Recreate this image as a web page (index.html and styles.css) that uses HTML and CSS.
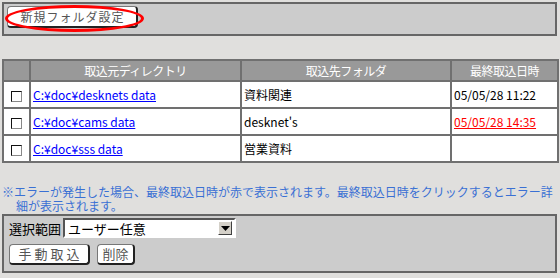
FILE: index.html
```html
<!DOCTYPE html>
<html lang="ja">
<head>
    <meta charset="UTF-8">
    <title>取込設定</title>
    <link rel="stylesheet" href="styles.css">
</head>
<body>
<div class="toolbar">
    <span class="mark">
        <button class="btn btn-new">新規フォルダ設定</button>
        <span class="circle"></span>
    </span>
</div>

<table class="list">
    <colgroup>
        <col class="col-check">
        <col class="col-src">
        <col class="col-dst">
        <col class="col-date">
    </colgroup>
    <tr>
        <th></th>
        <th>取込元ディレクトリ</th>
        <th>取込先フォルダ</th>
        <th>最終取込日時</th>
    </tr>
    <tr>
        <td class="cell-check"><span class="check"></span></td>
        <td><a href="#">C:¥doc¥desknets data</a></td>
        <td>資料関連</td>
        <td>05/05/28 11:22</td>
    </tr>
    <tr>
        <td class="cell-check"><span class="check"></span></td>
        <td><a href="#">C:¥doc¥cams data</a></td>
        <td>desknet's</td>
        <td><a href="#" class="error">05/05/28 14:35</a></td>
    </tr>
    <tr>
        <td class="cell-check"><span class="check"></span></td>
        <td><a href="#">C:¥doc¥sss data</a></td>
        <td>営業資料</td>
        <td></td>
    </tr>
</table>

<p class="note">※エラーが発生した場合、最終取込日時が赤で表示されます。最終取込日時をクリックするとエラー詳細が表示されます。</p>

<div class="panel">
    <div class="range">
        <span class="label">選択範囲</span>
        <span class="select">
            <span class="select-text">ユーザー任意</span>
            <span class="select-arrow">
                <svg width="9" height="5" viewBox="0 0 9 5"><path d="M0 0h9L4.5 5z" fill="#000"/></svg>
            </span>
        </span>
    </div>
    <div class="actions">
        <button class="btn btn-import">手動取込</button>
        <button class="btn btn-delete">削除</button>
    </div>
</div>
</body>
</html>
```

FILE: styles.css
```css
body {
    margin: 0;
    background-color: #e0dfdd;
    font-family: "Noto Sans CJK JP", sans-serif;
    font-size: 12px;
    color: #000;
}
.toolbar {
    margin: 2px 3px 0 2px;
    height: 30px;
    border: 2px solid #666;
    background-color: #cccccc;
    padding: 0 0 0 3px;
}
.mark {
    position: relative;
    display: inline-block;
    margin-top: 2px;
}
.circle {
    position: absolute;
    left: -2px;
    top: -1px;
    width: 139px;
    height: 27px;
    box-sizing: border-box;
    border: 3px solid #f00;
    border-radius: 50%;
}
.btn {
    font-family: "Noto Sans CJK JP", sans-serif;
    font-size: 12px;
    color: #555;
    background-color: #fff;
    border: 1px solid #777;
    border-right: 2px solid #222;
    border-bottom: 2px solid #222;
    border-radius: 4px;
    padding: 0;
    line-height: 18px;
    letter-spacing: 2px;
    text-indent: 2px;
}
.btn-new {
    width: 131px;
    height: 22px;
    font-size: 12px;
    letter-spacing: 1px;
    text-indent: 1px;
}
.list {
    margin: 23px 0 0 2px;
    width: 555px;
    table-layout: fixed;
    border-collapse: collapse;
    background-color: #fff;
}
.col-check { width: 27px; }
.col-src { width: 211px; }
.col-dst { width: 210px; }
.col-date { width: 107px; }
.list th, .list td {
    border: 2px solid #707070;
    padding: 0 2px;
    white-space: nowrap;
}
.list th {
    background-color: #999999;
    color: #fff;
    font-weight: normal;
    height: 19px;
    text-align: center;
    letter-spacing: -0.5px;
}
.list td {
    height: 25px;
}
.cell-check {
    text-align: center;
}
.check {
    display: inline-block;
    width: 9px;
    height: 9px;
    border: 1px solid #888;
    border-top-color: #111;
    border-left-color: #111;
    background-color: #fff;
    vertical-align: middle;
}
.list a {
    color: #0000ff;
}
.list a.error {
    color: #ff0000;
}
.note {
    margin: 22px 0 0 0;
    padding-left: 16px;
    text-indent: -14px;
    line-height: 14px;
    color: #3a70d4;
}
.panel {
    margin: 1px 3px 0 2px;
    height: 55px;
    border: 2px solid #666;
    background-color: #cccccc;
    padding: 0 0 0 5px;
}
.range {
    display: flex;
    align-items: center;
    margin-top: 2px;
    height: 20px;
}
.label {
    width: 54px;
    font-size: 13px;
}
.select {
    display: flex;
    align-items: center;
    width: 167px;
    height: 16px;
    border: 2px solid #000;
    border-top-color: #555;
    border-left-color: #555;
    border-right-color: #fff;
    border-bottom-color: #fff;
    background-color: #fff;
    padding-right: 2px;
}
.select-text {
    flex: 1;
    padding-left: 3px;
    font-size: 13px;
}
.select-arrow {
    display: flex;
    align-items: center;
    justify-content: center;
    width: 12px;
    height: 12px;
    background-color: #d4d0c8;
    border: 1px solid #fff;
    border-right-color: #404040;
    border-bottom-color: #404040;
}
.actions {
    display: flex;
    gap: 7px;
    margin-top: 6px;
}
.btn-import {
    width: 81px;
    height: 21px;
    font-size: 13px;
    letter-spacing: 3px;
    text-indent: 3px;
}
.btn-delete {
    width: 38px;
    height: 21px;
    font-size: 13px;
    letter-spacing: 0;
    text-indent: 0;
}
```
